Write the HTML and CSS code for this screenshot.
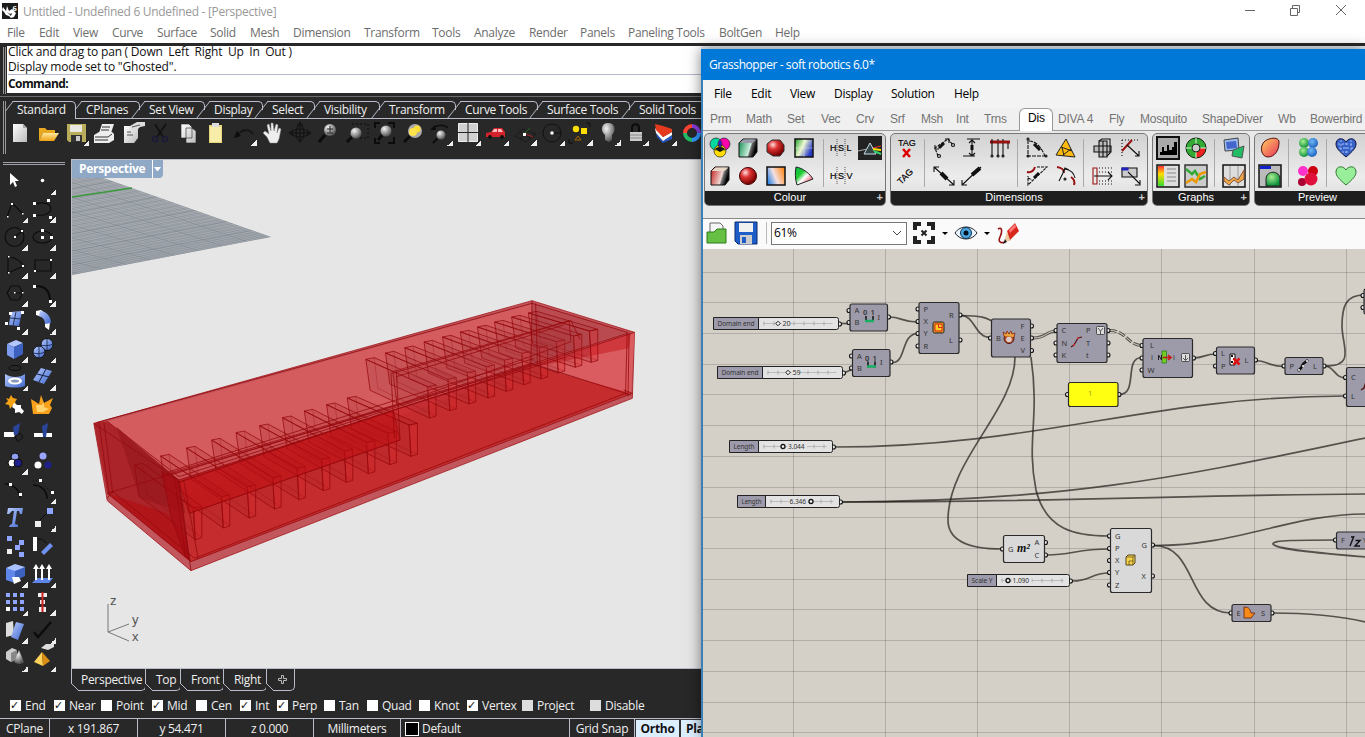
FILE: index.html
```html
<!DOCTYPE html>
<html lang="en">
<head>
<meta charset="utf-8">
<title>Untitled - Perspective</title>
<link rel="stylesheet" href="styles.css">
</head>
<body>
<svg class="defs" aria-hidden="true"><defs>
<linearGradient id="blue" x1="0" y1="0" x2="1" y2="1"><stop offset="0" stop-color="#b9ccff"/><stop offset="1" stop-color="#3f66cc"/></linearGradient>
<linearGradient id="paper" x1="0" y1="0" x2="1" y2="1"><stop offset="0" stop-color="#fff"/><stop offset="1" stop-color="#bbb"/></linearGradient>
<linearGradient id="gold" x1="0" y1="0" x2="0" y2="1"><stop offset="0" stop-color="#ffe9a0"/><stop offset="1" stop-color="#f0a010"/></linearGradient>
<radialGradient id="lens" cx=".35" cy=".3" r=".7"><stop offset="0" stop-color="#f4f4f4"/><stop offset="1" stop-color="#555"/></radialGradient>
<radialGradient id="red" cx=".35" cy=".3" r=".7"><stop offset="0" stop-color="#fdd"/><stop offset=".4" stop-color="#d33"/><stop offset="1" stop-color="#700"/></radialGradient>
<linearGradient id="greenbox" x1="0" y1="0" x2="1" y2=".3"><stop offset="0" stop-color="#0a8a48"/><stop offset=".68" stop-color="#cdeee0"/><stop offset=".76" stop-color="#666"/><stop offset="1" stop-color="#000"/></linearGradient>
<linearGradient id="redbox" x1="0" y1="0" x2="1" y2=".3"><stop offset="0" stop-color="#c01818"/><stop offset=".68" stop-color="#f0d8d4"/><stop offset=".76" stop-color="#777"/><stop offset="1" stop-color="#000"/></linearGradient>
<linearGradient id="gb" x1="0" y1="0" x2="1" y2=".5"><stop offset="0" stop-color="#19a02a"/><stop offset=".5" stop-color="#eef7d0"/><stop offset="1" stop-color="#2538c8"/></linearGradient>
<linearGradient id="bo" x1="0" y1=".7" x2="1" y2=".3"><stop offset="0" stop-color="#2f86e8"/><stop offset=".45" stop-color="#f4e0e0"/><stop offset="1" stop-color="#ff8a20"/></linearGradient>
<linearGradient id="fan" x1="0" y1="0" x2="1" y2="1"><stop offset="0" stop-color="#0b4"/><stop offset=".35" stop-color="#2c3"/><stop offset=".55" stop-color="#fff"/><stop offset="1" stop-color="#e02"/></linearGradient>
<linearGradient id="egg" x1="0" y1="0" x2="1" y2="1"><stop offset="0" stop-color="#ffd060"/><stop offset="1" stop-color="#e8305a"/></linearGradient>
<linearGradient id="leg" x1="0" y1="0" x2="0" y2="1"><stop offset="0" stop-color="#f33"/><stop offset=".4" stop-color="#fd0"/><stop offset="1" stop-color="#3d3"/></linearGradient>
<radialGradient id="ball" cx=".4" cy=".35" r=".65"><stop offset="0" stop-color="#a8f090"/><stop offset="1" stop-color="#0d8f3c"/></radialGradient>
<radialGradient id="ballb" cx=".4" cy=".35" r=".65"><stop offset="0" stop-color="#6fb8f4"/><stop offset="1" stop-color="#1d62c0"/></radialGradient>
</defs></svg>

<div class="rhino">
  <header class="title"><svg class="logo" viewBox="0 0 16 16"><path fill="#1b1b1b" d="M0 0h16v16H0z"/><path fill="#fff" d="M1 4l3 4 1-5 2 5 3-2 2 2 2 2-2 4-3 1-2-2-3-1-2-3-2-2z"/><path fill="#1b1b1b" d="M5 9l3 2 2-1-1 3z"/><text x="10.500" y="7.500" font-size="7.500" font-weight="700" fill="#fff">6</text></svg><span>Untitled - Undefined 6 Undefined - [Perspective]</span>
    <svg class="winbtns" viewBox="0 0 110 20" fill="none" stroke="#666"><path d="M2 8.500h10M47.500 6.500h7v7h-7zM49.500 6v-2.500h7v7h-2M93 3l10 10M103 3l-10 10"/></svg></header>
  <nav class="menu"><span>File</span><span>Edit</span><span>View</span><span>Curve</span><span>Surface</span><span>Solid</span><span>Mesh</span><span>Dimension</span><span>Transform</span><span>Tools</span><span>Analyze</span><span>Render</span><span>Panels</span><span>Paneling Tools</span><span>BoltGen</span><span>Help</span></nav>
  <section class="cmd"><div class="grip"></div><div class="cmdbox"><p>Click and drag to pan ( Down&nbsp; Left&nbsp; Right&nbsp; Up&nbsp; In&nbsp; Out )</p><p>Display mode set to "Ghosted".</p><p class="prompt">Command:</p></div></section>
  <section class="tools">
    <div class="grip"></div>
    <div class="toolbody">
    <div class="tabs"><span class="on">Standard</span><span>CPlanes</span><span>Set View</span><span>Display</span><span>Select</span><span>Visibility</span><span>Transform</span><span>Curve Tools</span><span>Surface Tools</span><span>Solid Tools</span></div>
    <div class="iconrow">
      <svg viewBox="0 0 28 28"><path fill="url(#paper)" d="M7 5h10l4 4v14H7z"/><path d="M17 5v4h4" fill="#aaa"/></svg>
      <svg viewBox="0 0 28 28"><path fill="#e8a820" d="M5 9h6l2 2h8v3H9l-4 8z"/><path fill="url(#gold)" d="M9 14h16l-5 8H5z"/></svg>
      <svg class="more" viewBox="0 0 28 28"><path fill="#b9ad5c" d="M5 5h19v18H7l-2-2z"/><path fill="#e8e8e0" d="M8 6h12v7H8z"/><path fill="#333" d="M9 16h11v7H9z"/><path fill="#ccc" d="M14 17h4v5h-4z"/></svg>
      <svg viewBox="0 0 28 28"><path fill="#eee" d="M12 5h12l-3 9H9zM4 16l5-3h13l2 2v6l-5 3H4z"/><path d="M5 18h13l4-3M5 21h13M12 8h8M11 11h8" stroke="#333" fill="none"/></svg>
      <svg viewBox="0 0 28 28"><path fill="url(#paper)" d="M6 7h14v12l-4 5H6z"/><path fill="#ddd" d="M12 7l7-4h8v4l-5 1-4 4-5-1z"/><path d="M9 13h4M9 16h6M14 8l8-2" stroke="#555"/></svg>
      <svg viewBox="0 0 28 28" fill="none" stroke="#101014" stroke-width="1.500"><path d="M9 5l8 13M20 5l-9 13"/><circle cx="9" cy="20" r="2.500" stroke="#1b1b38"/><circle cx="19" cy="20" r="2.500" stroke="#1b1b38"/></svg>
      <svg viewBox="0 0 28 28"><path fill="url(#paper)" stroke="#222" stroke-width=".6" d="M7 5h8l3 3v11H7zM12 9h6l4 3v12H12z"/></svg>
      <svg viewBox="0 0 28 28"><path fill="#e8d67a" d="M7 6h13v18H7z"/><path fill="#f7eda8" d="M8 8h11v15H8z"/><path fill="#ddd" d="M10 4h7v4h-7z"/></svg>
      <svg class="more" viewBox="0 0 28 28"><path d="M23 15c-3-5-9-5-14-1" stroke="#151515" stroke-width="2" fill="none"/><path d="M4 19l3-7 4 5z" fill="#0c0c0c"/></svg>
      <svg viewBox="0 0 28 28"><path fill="#eee" stroke="#888" stroke-width=".5" d="M12 24l-3-6-4-4 2-2 4 3-2-9 2-1 2 7V4h2l1 8 2-7 2 1-1 8 2-5 2 1-2 10-2 4z"/></svg>
      <svg viewBox="0 0 28 28" fill="none" stroke="#111" stroke-width="1"><path d="M14 4v20M4 14h20M11 7l3-4 3 4M7 11l-4 3 4 3M21 11l4 3-4 3"/><ellipse cx="14" cy="14" rx="8" ry="4"/><ellipse cx="14" cy="14" rx="4" ry="8"/></svg>
      <svg viewBox="0 0 28 28"><path d="M5 23l6-7" stroke="#0c0c0c" stroke-width="3"/><circle cx="16" cy="11" r="6" fill="url(#lens)"/><path d="M13 10h6M16 7v6M13 14h6" stroke="#222"/></svg>
      <svg viewBox="0 0 28 28"><path d="M5 23l6-6" stroke="#0c0c0c" stroke-width="3"/><path d="M10 5h16v14H18" stroke="#0c0c0c" fill="none" stroke-dasharray="2 2"/><circle cx="14" cy="14" r="5.500" fill="url(#lens)"/></svg>
      <svg viewBox="0 0 28 28"><path d="M5 9V4h5M18 4h6v5M24 18v6h-6M10 24H5v-5" stroke="#0c0c0c" stroke-width="2" fill="none"/><path d="M8 21l5-6" stroke="#0c0c0c" stroke-width="3"/><circle cx="16" cy="12" r="5.500" fill="url(#lens)"/></svg>
      <svg viewBox="0 0 28 28"><path d="M6 23l6-6" stroke="#0c0c0c" stroke-width="3"/><circle cx="17" cy="12" r="7" fill="#aaa"/><circle cx="19" cy="10" r="3.500" fill="#fd3"/><circle cx="15" cy="13" r="4" fill="#ffe34a"/></svg>
      <svg class="more" viewBox="0 0 28 28"><path d="M22 9c-4-4-9-3-14-1" stroke="#0c0c0c" stroke-width="1.500" fill="none"/><path d="M4 11l5-5 1 5z" fill="#0c0c0c"/><path d="M7 24l6-6" stroke="#0c0c0c" stroke-width="2"/><circle cx="15" cy="16" r="4.500" fill="url(#lens)"/></svg>
      <svg class="more" viewBox="0 0 28 28"><path fill="#d0d0d0" stroke="#eee" d="M4.500 4.500h19v18h-19z"/><path d="M14 4v19M4 13.500h20" stroke="#222"/></svg>
      <svg class="more" viewBox="0 0 28 28"><path fill="#d3222a" d="M4 14l5-1 3-4h8l3 4v5H4z"/><path fill="#fbb" d="M12 10h3v3h-5zM16 10h3l2 3h-5z"/><circle cx="8" cy="18" r="2" fill="#111"/><circle cx="20" cy="18" r="2" fill="#111"/></svg>
      <svg class="more" viewBox="0 0 28 28"><path d="M5 17l8-7 13 5-10 8zM9 13l12 6M17 12l-7 8" stroke="#1a1a1a" fill="none"/><path d="M15 14l5-5" stroke="#262"/><path d="M16 15l7 3" stroke="#a22"/><path fill="#fff" d="M13 14h3v3h-3z"/></svg>
      <svg class="more" viewBox="0 0 28 28"><circle cx="14" cy="14" r="9" fill="none" stroke="#111"/><path d="M14 14h10" stroke="#111"/><circle cx="14" cy="14" r="1.800" fill="#fff"/></svg>
      <svg class="more" viewBox="0 0 28 28"><circle cx="10" cy="10" r="3.200" fill="#fd0"/><path fill="#fd0" d="M15 9h6v6h-6z"/><path d="M12 17l3 4H9z" fill="none" stroke="#a60"/><path d="M20 4h4v4M3 20v4h4" fill="none" stroke="#0c0c0c" /></svg>
      <svg class="more" viewBox="0 0 28 28"><path fill="url(#lens)" d="M14 4c8 0 8 8 4 12v5l-3 2-4-2v-5C6 12 7 4 14 4z"/></svg>
      <svg class="more" viewBox="0 0 28 28"><path d="M10 14V9c0-5 7-5 7 0v5" stroke="#0c0c0c" stroke-width="2" fill="none"/><path fill="#ccc" d="M8 13h12v9H8z"/><path d="M8 16h12M8 19h12" stroke="#888"/></svg>
      <svg class="more" viewBox="0 0 28 28"><path fill="#2356c0" d="M6 14l7 8 9-6v4l-9 4-6-6z"/><path fill="#fff" d="M5 9l8 9 9-5v3l-9 6-7-8z"/><path fill="#e53b1c" d="M5 5l8 2 9 3v3l-9 5-7-7z"/></svg>
      <svg viewBox="0 0 28 28" fill="none" stroke-width="4"><path d="M14 7a7 7 0 0 1 7 7" stroke="#8a3de0"/><path d="M21 14a7 7 0 0 1-7 7" stroke="#39f"/><path d="M14 21a7 7 0 0 1-7-7" stroke="#2b6"/><path d="M7 14a7 7 0 0 1 7-7" stroke="#f43"/></svg>
    </div></div>
  </section>
  <div class="work">
    <aside class="side">
      <div class="hgrip"></div>
      <div class="palette">
        <svg viewBox="0 0 28 28"><path fill="#fff" d="M10 6v12l3-3 2 5 2-1-2-5h4z"/></svg>
        <svg class="more" viewBox="0 0 28 28"><circle cx="14.500" cy="13.500" r="1.800" fill="#fff"/></svg>
        <svg class="more" viewBox="0 0 28 28"><path d="M7 22l5-14 11 11" fill="none" stroke="#0c0c0c" stroke-width="1.100"/><path fill="#fff" d="M7 21h1.500v1.500H7zM11 8h2v2h-2zM22 18h1.500v1.500H22z"/></svg>
        <svg class="more" viewBox="0 0 28 28"><path d="M7 9c20-6 22 14 0 11" fill="none" stroke="#0c0c0c" stroke-width="1.100"/><path fill="#fff" d="M5 7h3v3H5zM19 4h3v3h-3zM5 19h3v3H5zM21 21h3v3h-3z"/></svg>
        <svg class="more" viewBox="0 0 28 28"><g fill="none" stroke="#0c0c0c" stroke-width="1.100"><circle cx="14.500" cy="14" r="9.500"/><path d="M15 14l7-6"/></g><path fill="#fff" d="M14 13h2v2h-2zM21 7h2v2h-2z"/></svg>
        <svg class="more" viewBox="0 0 28 28"><ellipse cx="14.500" cy="14" rx="9.500" ry="6" fill="none" stroke="#0c0c0c" stroke-width="1.100"/><path fill="#fff" d="M13 6h3v3h-3zM13 13h3v3h-3zM22 13h3v3h-3z"/></svg>
        <svg class="more" viewBox="0 0 28 28"><path d="M8 22V6c8 0 12 4 16 9z" fill="none" stroke="#0c0c0c" stroke-width="1.100"/><path fill="#fff" d="M8 5h1.500v1.500H8zM8 21h1.500v1.500H8zM22 14h2v2h-2z"/></svg>
        <svg class="more" viewBox="0 0 28 28"><path d="M7 9h16v11H7z" fill="none" stroke="#0c0c0c" stroke-width="1.100"/><path fill="#fff" d="M22 8h2v2h-2zM6 19h2v2H6z"/></svg>
        <svg class="more" viewBox="0 0 28 28"><path d="M7 14l4-7h8l4 7-4 7h-8z" fill="none" stroke="#0c0c0c" stroke-width="1.100"/><path d="M14 14h8" stroke="#0c0c0c"/><path fill="#fff" d="M14 13h1.500v1.500H14zM22 13h1.500v1.500H22z"/></svg>
        <svg class="more" viewBox="0 0 28 28"><path d="M8 7c10 0 14 5 14 15" fill="none" stroke="#0c0c0c" stroke-width="2"/><path fill="#fff" d="M5 6h3v3H5zM21 21h3v3h-3z"/></svg>
        <svg class="more" viewBox="0 0 28 28"><path fill="url(#blue)" d="M11 5l11-1-3 15-10-1z"/><path d="M16 5l-3 14M10 11l11 1" stroke="#235"/><path fill="#fff" d="M9 5h3v3H9zM21 4h3v3h-3zM5 15h3v3H5zM17 20h3v3h-3z"/></svg>
        <svg class="more" viewBox="0 0 28 28"><path fill="#fff" d="M8 4l5-1 4 3-3 4-6-2zM17 16l5-1-1 8-4-3z"/><path fill="url(#blue)" d="M12 4c6 0 11 5 11 12l-6 1c0-5-3-7-6-8z"/></svg>
        <svg class="more" viewBox="0 0 28 28"><path fill="#b4c8ff" d="M7 9l9-4 7 3-9 4z"/><path fill="#7d9cf0" d="M7 9l7 3v12l-7-4z"/><path fill="#3c61c0" d="M14 12l9-4v11l-9 5z"/></svg>
        <svg class="more" viewBox="0 0 28 28"><circle cx="19" cy="9.500" r="6" fill="url(#blue)" stroke="#111"/><circle cx="11" cy="17" r="6" fill="url(#blue)" stroke="#111"/><path d="M13 10c4 1 8 1 12-1M5 18c4 1 8 1 12-1M11 11v12M19 4v11" stroke="#124" stroke-width=".8" fill="none"/></svg>
        <svg class="more" viewBox="0 0 28 28"><ellipse cx="15" cy="5" rx="6" ry="2.500" fill="none" stroke="#0c0c0c"/><path fill="url(#blue)" d="M5 11c6 4 15 4 20 0v12c-5 2-15 2-20 0z"/><ellipse cx="15" cy="18" rx="7" ry="3.500" fill="#fff"/><ellipse cx="15" cy="18" rx="4" ry="1.500" fill="#89b"/></svg>
        <svg class="more" viewBox="0 0 28 28"><path fill="url(#blue)" d="M13 5l11 3-8 13-11-4z"/><path d="M9 11l12 3M18 6l-7 13" stroke="#124"/></svg>
        <svg viewBox="0 0 28 28"><path fill="#f7a316" d="M6 7l3 1 2-4 2 3 4 1-2 3 2 4-4-1-3 4-1-4-4-1 3-3z"/><path fill="#fff" d="M14 12l3 2 4 0 0 3 3 3-2 3-3-2-4 1 0-4-3-2z"/></svg>
        <svg viewBox="0 0 28 28"><path fill="#f9a11b" d="M3 8l8 5 2-9 3 8 9-5-3 7 2 3-3 6H5z"/><path fill="#ffd370" d="M8 14l6 0 2-3 0 5 5 2-6 3H9z"/></svg>
        <svg viewBox="0 0 28 28"><path fill="#fff" d="M4 13h12l-2 5H4z"/><path fill="#29459a" d="M13 8l7-4-2 12h-4z"/><path d="M15 18l5-4 3 4-5 5z" fill="none" stroke="#0c0c0c"/></svg>
        <svg viewBox="0 0 28 28"><path fill="#fff" d="M6 14h18v4H6z"/><path fill="#29459a" d="M14 7l6-3-2 14h-3z"/></svg>
        <svg class="more" viewBox="0 0 28 28" stroke="#0c0c0c"><circle cx="15" cy="10" r="4" fill="#8e9df0"/><circle cx="12" cy="16" r="4" fill="#fff"/><circle cx="18" cy="16" r="4" fill="#20208c"/></svg>
        <svg viewBox="0 0 28 28"><circle cx="15" cy="9" r="3.500" fill="#9aa6ff"/><circle cx="10" cy="18" r="3.500" fill="#fff"/><circle cx="20" cy="18" r="3.500" fill="#20208c"/></svg>
        <svg viewBox="0 0 28 28"><path d="M5 8c7 0 15 5 15 14" fill="none" stroke="#0c0c0c" stroke-width="1.600"/><path fill="#fff" d="M9 7h3v3H9zM19 17h3v3h-3z"/></svg>
        <svg class="more" viewBox="0 0 28 28"><path d="M5 9c8 0 14 5 14 14" fill="none" stroke="#0c0c0c" stroke-width="1.600"/><path d="M5 5h9l9 12" stroke="#0c0c0c" stroke-dasharray="1 2" fill="none"/><path fill="#fff" d="M11 3h3v3h-3zM23 15h3v3h-3z"/></svg>
        <svg viewBox="0 0 28 28"><path fill="url(#blue)" d="M8 4h15l-1 6h-2l-1-3h-2l-2 13 3 1v2H9l1-2 2-1 2-13h-2l-3 3H7z"/></svg>
        <svg class="more" viewBox="0 0 28 28"><path d="M12 16l8-8" stroke="#0c0c0c"/><path fill="#8fa6ff" d="M19 4h6v6h-6z"/><path fill="#eee" d="M7 17h6v6H7z"/></svg>
        <svg viewBox="0 0 28 28"><path fill="#8fa6ff" d="M7 4h5v5H7zM19 8h5v5h-5zM15 13h5v5h-5zM19 20h5v5h-5z"/><path fill="#eee" d="M7 17h5v5H7z"/></svg>
        <svg viewBox="0 0 28 28"><path fill="#fff" d="M5 5h4v14H5z"/><path d="M10 7c6 0 6 3 9 4" stroke="#0c0c0c" fill="none"/><path fill="#6e90ee" d="M13 20l9-9 3 3-9 9z"/></svg>
        <svg class="more" viewBox="0 0 28 28"><path fill="#a9c2ff" d="M6 8l9-4 10 3v5l-8 3z"/><path fill="#5f86ea" d="M6 8l9 3v12l-9-3z"/><path fill="#3c61c0" d="M15 11l10-4v9l-10 5z"/><path fill="#fff" d="M12 17h7l2 4-7 3z"/></svg>
        <svg class="more" viewBox="0 0 28 28"><path fill="#5f86ea" d="M4 23l5-5h16l-4 5z"/><path d="M8 20V8M14 20V8M21 20V8" stroke="#fff" stroke-width="2"/><path fill="#fff" d="M5 9l3-5 3 5zM11 9l3-5 3 5zM18 9l3-5 3 5z"/></svg>
        <svg class="more" viewBox="0 0 28 28"><path fill="#8fa6ff" d="M6 5h4v4H6zM13 5h4v4h-4zM20 5h4v4h-4zM6 12h4v4H6zM13 12h4v4h-4zM20 12h4v4h-4zM13 19h4v4h-4zM20 19h4v4h-4z"/><path fill="#fff" d="M6 19h4v4H6z"/></svg>
        <svg class="more" viewBox="0 0 28 28"><path fill="#eee" d="M10 5h9v4h-9zM12 12h5v4h-5zM11 19h7v5h-7z"/><path d="M14.500 4v20" stroke="#c22" stroke-width="2"/></svg>
        <svg class="more" viewBox="0 0 28 28"><path fill="#ddd" d="M6 7l7-2 1 14-8 2z"/><path fill="url(#blue)" d="M16 6l8 2-6 16-7-3z"/></svg>
        <svg class="more" viewBox="0 0 28 28"><path d="M6 16l4 5 13-15" stroke="#0c0c0c" stroke-width="2.500" fill="none"/></svg>
        <svg class="more" viewBox="0 0 28 28"><path fill="#ccc" d="M6 8l6-4 5 2v9l-6 3-5-3z"/><path fill="#888" d="M11 9l6-3v9l-6 3z"/><path fill="url(#lens)" d="M19 6l5 12c-3 3-7 2-10 0z"/></svg>
        <svg class="more" viewBox="0 0 28 28"><path fill="#ddd" d="M13 4l5-4h8v3l-6 3z"/><path fill="#ffd25a" d="M14 8l-8 10 9 4z"/><path fill="#d98d12" d="M14 8l8 9-7 5z"/></svg>
      </div>
    </aside>
    <main class="view">
      <svg class="scene" id="scene" viewBox="72 160 629 509"></svg>
      <div class="vlabel"><b>Perspective</b><i></i></div>
    </main>
  </div>
  <div class="vtabs"><span>Perspective</span><span>Top</span><span>Front</span><span>Right</span><span class="plus"><svg viewBox="0 0 12 12"><path d="M4.500 1.500h2v3h3v2h-3v3h-2v-3h-3v-2h3z" fill="none" stroke="#bbb"/></svg></span></div>
  <div class="osnap"><span class="c">End</span><span class="c">Near</span><span>Point</span><span class="c">Mid</span><span>Cen</span><span class="c">Int</span><span class="c">Perp</span><span>Tan</span><span>Quad</span><span>Knot</span><span class="c">Vertex</span><span class="g">Project</span><span class="g">Disable</span></div>
  <footer class="status"><span>CPlane</span><span>x 191.867</span><span>y 54.471</span><span>z 0.000</span><span>Millimeters</span><span class="layer"><i></i>Default</span><span>Grid Snap</span><b>Ortho</b><b class="last">Planar</b></footer>
</div>

<div class="gh">
  <header class="ghtitle">Grasshopper - soft robotics 6.0*</header>
  <nav class="ghmenu"><span>File</span><span>Edit</span><span>View</span><span>Display</span><span>Solution</span><span>Help</span></nav>
  <nav class="ghtabs"><span>Prm</span><span>Math</span><span>Set</span><span>Vec</span><span>Crv</span><span>Srf</span><span>Msh</span><span>Int</span><span>Trns</span><span class="on">Dis</span><span>DIVA 4</span><span>Fly</span><span>Mosquito</span><span>ShapeDiver</span><span>Wb</span><span>Bowerbird</span></nav>
  <div class="ribbon">
    <section class="group colour"><div class="icons">
      <svg viewBox="0 0 24 24"><circle cx="8" cy="8" r="6" fill="#00d8a0"/><circle cx="16" cy="8" r="6" fill="#f0a"/><circle cx="12" cy="15" r="6" fill="#fd0"/><path d="M12 4a6 6 0 0 1 0 8 6 6 0 0 1 0-8z" fill="#22d"/><path d="M7 13a6 6 0 0 1 5-2 6 6 0 0 1 5 2l-5 3z" fill="#111"/><g fill="none" stroke="#222" stroke-width=".7"><circle cx="8" cy="8" r="6"/><circle cx="16" cy="8" r="6"/><circle cx="12" cy="15" r="6"/></g></svg>
      <svg viewBox="0 0 24 24"><path fill="url(#greenbox)" stroke="#111" d="M3 7l4-4h14v13l-4 5H3z"/><path fill="#99a" d="M3.500 7l4-3.500h13l-4 3.500z"/></svg>
      <svg viewBox="0 0 24 24"><path fill="url(#red)" stroke="#333" d="M8 4h8l4 5v6l-4 5H9l-6-4V8z"/></svg>
      <svg viewBox="0 0 24 24"><path fill="url(#gb)" stroke="#111" stroke-width="1.500" d="M3 3h18v18H3z"/><path d="M12 3v18M3 12h18" stroke="#fff" opacity=".3"/></svg>
      <svg viewBox="0 0 24 24" class="txt"><text x="1" y="15">H</text><text x="9" y="15">S</text><text x="17.500" y="15">L</text><path d="M8 3v18M16 3v18" stroke="#555" stroke-dasharray="1 1"/></svg>
      <svg viewBox="0 0 24 24"><path fill="#222" d="M0 0h24v24H0z"/><path d="M12 7l6 11H6z" fill="#344" stroke="#cde" /><path d="M0 15l9-2" stroke="#aaa"/><path d="M15 12l8-2" stroke="#e33"/><path d="M15 13l8 1" stroke="#fd0" stroke-width="2"/><path d="M16 15l7 3" stroke="#3c6" stroke-width="2"/></svg>
      <svg viewBox="0 0 24 24"><path fill="url(#redbox)" stroke="#111" d="M3 7l4-4h14v13l-4 5H3z"/><path fill="#e8d8c8" d="M3.500 7l4-3.500h13l-4 3.500z"/></svg>
      <svg viewBox="0 0 24 24"><circle cx="12" cy="12" r="8.500" fill="url(#red)" stroke="#400"/></svg>
      <svg viewBox="0 0 24 24"><path fill="url(#bo)" stroke="#111" stroke-width="1.500" d="M3 3h18v18H3z"/></svg>
      <svg viewBox="0 0 24 24"><path fill="url(#fan)" stroke="#222" d="M4 3c7 1 14 7 17 12L5 21C3 15 3 8 4 3z"/></svg>
      <svg viewBox="0 0 24 24" class="txt"><text x="1" y="15">H</text><text x="9" y="15">S</text><text x="17.500" y="15">V</text><path d="M8 3v18M16 3v18" stroke="#555" stroke-dasharray="1 1"/></svg>
    </div><footer>Colour</footer></section>
    <section class="group dims"><div class="icons">
      <svg viewBox="0 0 24 24" class="txt"><text x="3" y="10">TAG</text><path d="M8 13l7 8M15 13l-7 8" stroke="#d00" stroke-width="2.500"/></svg>
      <svg viewBox="0 0 24 24" class="ln"><path d="M6 20L3 12l13-9 5 6" stroke-dasharray="3 1"/><path d="M7 12l5-5" stroke-width="3"/><path d="M3 9v4h4M13 3h4v4"/><circle cx="7" cy="20" r="1.500"/><circle cx="21" cy="9" r="1.500"/></svg>
      <svg viewBox="0 0 24 24" class="ln"><path d="M7 3h13M3 20h12M12 4v15M9 7l3-3 3 3M9 17l3 3 3-3"/><path d="M12 9v5" stroke-width="3"/></svg>
      <svg viewBox="0 0 24 24" class="ln"><path d="M2 6h20" stroke="#911" stroke-width="3"/><path d="M4 3v16M10 7v13M15 7v13M20 7v6M10 3v2M15 3v2"/><circle cx="4" cy="20" r="1"/><circle cx="10" cy="20" r="1"/><circle cx="15" cy="20" r="1"/></svg>
      <svg viewBox="0 0 24 24" class="ln"><path d="M3 4v16h17M4 5c8 0 13 8 16 15" stroke-dasharray="4 1"/><path d="M9 8l6 6" stroke-width="3"/><circle cx="3" cy="3" r="1"/><circle cx="21" cy="20" r="1"/><circle cx="3" cy="20" r="1"/></svg>
      <svg viewBox="0 0 24 24"><path fill="#fb1" stroke="#222" d="M12 3L2 19l19 2zM7 11l11 4M8 11l2 9M17 13l-8 6"/></svg>
      <svg viewBox="0 0 24 24" class="ln"><path d="M3 10h17v6H3zM8 5h8v16H8z" fill="#bbb"/><path d="M12 5v16M8 5l3-2h8v14l-3 3"/></svg>
      <svg viewBox="0 0 24 24" class="ln"><path d="M3 4h17M3 4v16" stroke-dasharray="1 2"/><path d="M3 15L13 4" stroke="#911" stroke-width="2"/><path d="M8 9l12 11M16 20h4v-5"/></svg>
      <svg viewBox="0 0 24 24" class="txt"><text x="0" y="0" transform="translate(6 21) rotate(-45)">TAG</text></svg>
      <svg viewBox="0 0 24 24" class="ln"><path d="M2 3l20 18M2 8V3h5M22 16v5h-5"/><path d="M9 9l6 6" stroke-width="4"/></svg>
      <svg viewBox="0 0 24 24" class="ln"><path d="M2 21L21 3M2 16v5h5"/><path d="M12 11l8-7" stroke-width="4"/></svg>
      <svg viewBox="0 0 24 24"></svg>
      <svg viewBox="0 0 24 24" class="ln"><path d="M2 8c5 1 7-2 8-5" stroke="#911" stroke-width="2"/><path d="M12 3h10L3 21v-9M3 14l4 2" stroke-dasharray="3 1"/><path d="M9 14l5-5" stroke-width="3"/></svg>
      <svg viewBox="0 0 24 24" class="ln"><path d="M3 3c6 1 7 3 7 6M20 21c1-3 0-6-3-8" stroke="#911" stroke-width="2"/><path d="M5 17l6-12c6 1 9 4 10 9M9 8l2-4 4 2"/><circle cx="11" cy="15" r="1"/></svg>
      <svg viewBox="0 0 24 24" class="ln"><path d="M2 4h4v16H2z" stroke="#911"/><path d="M8 4h13M8 20h13M8 8h13M8 17h13" stroke-dasharray="1 2"/><path d="M3 12h18M17 8l4 4-4 4"/></svg>
      <svg viewBox="0 0 24 24" class="ln"><path d="M3 4h15v9H3z" fill="#ccc"/><path d="M3 4h6v2H3z" fill="#22b" stroke="#22b"/><path d="M9 8l12 12M21 16v5h-5"/></svg>
    </div><footer>Dimensions</footer></section>
    <section class="group graphs"><div class="icons">
      <svg viewBox="0 0 24 24"><path fill="#aaa" stroke="#111" stroke-width="2" d="M1 1h22v22H1z"/><path fill="#000" d="M4 19h17V6h-3v5h-2v3h-3V9h-2v6H8v-4H6v5H4z"/></svg>
      <svg viewBox="0 0 24 24"><circle cx="12" cy="12" r="7" fill="none" stroke="#3a3" stroke-width="6"/><path d="M12 19a7 7 0 0 0 7-7" fill="none" stroke="#e22" stroke-width="6"/><circle cx="12" cy="12" r="10" fill="none" stroke="#121"/><path d="M12 2v6M2 12h6M16 12h6M12 16v6" stroke="#dfd"/><circle cx="12" cy="12" r="4" fill="#ccc" stroke="#121"/></svg>
      <svg viewBox="0 0 24 24"><path fill="#9be" stroke="#444" d="M2 4l14-2 1 12-14 1z"/><path fill="#46c" d="M4 6l10-1 1 7-10 1z"/><path fill="#2b6" stroke="#555" d="M11 14l11-4-2 12-10-2z"/></svg>
      <svg viewBox="0 0 24 24"><path fill="#ddd" stroke="#111" stroke-width="1.500" d="M1 1h22v22H1z"/><path fill="url(#leg)" d="M2 2h6v20H2z"/><path d="M11 5h9M11 9h9M11 13h9M11 17h9" stroke="#888"/></svg>
      <svg viewBox="0 0 24 24"><path fill="#ccc" stroke="#333" stroke-width="1.500" d="M1 1h22v22H1z"/><path d="M2 5l6 5 3-3 5 8 5-3" stroke="#3a3" stroke-width="2.500" fill="none"/><path d="M2 19l6-4 4 3 4-8 6-2" stroke="#e90" stroke-width="2.500" fill="none"/></svg>
      <svg viewBox="0 0 24 24"><path fill="#ddd" stroke="#111" stroke-width="1.500" d="M1 1h22v22H1z"/><path d="M8 2v20M16 2v20" stroke="#999"/><path d="M2 13l5 4 5-4 4 3 6-10v9l-6 4-4-3-5 5-5-4z" fill="#ea4" stroke="#854"/></svg>
    </div><footer>Graphs</footer></section>
    <section class="group preview"><div class="icons">
      <svg viewBox="0 0 24 24"><path fill="url(#egg)" stroke="#511" d="M7 5c6-4 15-4 14 2 0 8-5 14-11 14C3 21 1 10 7 5z"/></svg>
      <svg viewBox="0 0 24 24"><circle cx="8" cy="7" r="5" fill="url(#ball)"/><circle cx="17" cy="7" r="5" fill="url(#ballb)"/><circle cx="8" cy="16" r="5" fill="url(#ball)"/><circle cx="16" cy="16" r="5" fill="url(#ballb)"/></svg>
      <svg viewBox="0 0 24 24"><path fill="#3562c4" stroke="#114" d="M12 21C5 15 2 12 2 8c0-6 7-7 10-2 3-5 10-4 10 2 0 4-3 7-10 13z"/><path d="M4 8h16M5 12h14M8 16h8M7 4v12M12 7v12M17 4v12" stroke="#abf" stroke-dasharray="2 2"/></svg>
      <svg viewBox="0 0 24 24"><path fill="#bbb" stroke="#111" stroke-width="1.500" d="M1 1h22v22H1z"/><path fill="#12c" d="M2 2h11v3H2z"/><path fill="url(#ball)" stroke="#222" d="M8 22v-7c0-9 14-9 14 0v7z"/></svg>
      <svg viewBox="0 0 24 24"><circle cx="7" cy="7" r="5" fill="#f3c"/><circle cx="17" cy="7" r="5" fill="#c01"/><circle cx="6" cy="18" r="4" fill="#a03"/><circle cx="15" cy="15" r="6.500" fill="#e0103c"/></svg>
      <svg viewBox="0 0 24 24"><path fill="#9e9" stroke="#373" d="M12 21C5 15 2 12 2 8c0-6 7-7 10-2 3-5 10-4 10 2 0 4-3 7-10 13z"/></svg>
    </div><footer>Preview</footer></section>
  </div>
  <div class="ghbar">
    <svg viewBox="0 0 24 24"><path fill="#f6f6f6" stroke="#666" d="M6 2h10l3 3v9H6z"/><path fill="#66c043" stroke="#2c7a1c" d="M3 11h7l3-3h9v14H3z"/></svg>
    <svg viewBox="0 0 24 24"><path fill="#1e5cc8" stroke="#0a2a70" d="M1 1h22v22H4l-3-3z"/><path fill="#f0f0f0" d="M5 2h14v9H5z"/><path fill="#ccc" d="M6 14h12v9H6z"/><path fill="#1e5cc8" d="M8 16h4v6H8z"/></svg>
    <hr>
    <div class="combo">61%<svg viewBox="0 0 10 6"><path d="M1 1l4 4 4-4" fill="none" stroke="#444"/></svg></div>
    <svg viewBox="0 0 24 24" fill="none" stroke="#222" stroke-width="4"><path d="M3 9V3h6M15 3h6v6M21 15v6h-6M9 21H3v-6"/><path d="M9.500 9.500l5 5M14.500 9.500l-5 5" stroke-width="2"/></svg>
    <i class="drop"></i>
    <svg viewBox="0 0 24 24"><path d="M1 12C6 4 18 4 23 12 18 20 6 20 1 12z" fill="#e8f4ff" stroke="#222"/><circle cx="12" cy="12" r="5.500" fill="#49a8e0" stroke="#135"/><circle cx="12" cy="12" r="2.500" fill="#012"/></svg>
    <i class="drop"></i>
    <svg viewBox="0 0 24 24"><path d="M2 8c5-3 4 4 2 8s0 7 5 5" fill="none" stroke="#911" stroke-width="1.600"/><path fill="#d8281c" d="M11 10l8-8 4 8-10 10z"/><path fill="#f77" d="M13 9l6-6 1 3-6 6z"/><path fill="#edc9a0" d="M11 10l3 9-6 3z"/><path fill="#222" d="M9 18l-2 5 4-2z"/></svg>
  </div>
  <svg class="canvas" id="canvas" viewBox="703 249 662 488"></svg>
</div>
<script src="draw.js"></script>
</body>
</html>
```
FILE: styles.css
```css
* { box-sizing: border-box; }
body { margin: 0; width: 1365px; height: 737px; overflow: hidden; background: #282828; color: #f0f0f0; font: 12px/16px "Open Sans", "Noto Sans", sans-serif; letter-spacing: -.3px; position: relative; }
p { margin: 0; }
span, b { white-space: nowrap; }
.defs { position: absolute; width: 0; height: 0; }
.rhino { width: 1365px; height: 737px; display: flex; flex-direction: column; }
.title { height: 23px; background: #fff; color: #999; display: flex; align-items: center; padding-left: 2px; flex: none; }
.title .logo { width: 16px; height: 16px; margin: 0 5px 1px 0; }
.title .winbtns { width: 110px; height: 20px; margin-left: auto; margin-right: 12px; }
.title span { letter-spacing: -.3px; }
.menu { flex: none; height: 20px; background: #fff; color: #6d6d6d; display: grid; align-items: center; padding-left: 7px; grid-template-columns: 32px 34px 39px 45px 53px 40px 43px 71px 68px 42px 55px 51px 48px 91px 56px 40px; }
.cmd { height: 54px; flex: none; padding-top: 3px; display: flex; border-bottom: 1px solid #6b6b6b; }
.grip { width: 3px; margin: 1px 0 2px 3px; border: solid #999; border-width: 0 1px; flex: none; }
.cmdbox { margin-left: 1px; flex: 1; height: 47px; background: #fff; color: #111; padding-left: 1px; }
.cmdbox p { height: 13px; line-height: 12px; letter-spacing: -.15px; word-spacing: -.2px; }
.cmdbox p + p { height: 15px; line-height: 15px; }
.cmdbox p.prompt { border-top: 1px solid #b4b8cc; height: 18px; line-height: 17px; font-weight: 700; letter-spacing: -.6px; }
.tools { height: 62px; flex: none; display: flex; padding-top: 4px; }
.tools .grip { margin: 0 0 5px 3px; }
.toolbody { width: 700px; }
.tabs { height: 17px; display: grid; grid-template-columns: 70px 56px 65px 58px 52px 65px 76px 82px 92px 90px; }
.tabs span { position: relative; line-height: 17px; text-align: left; padding-left: 17px; border-bottom: 1px solid #b9bccb; }
.tabs span::before { content: ""; position: absolute; left: 6px; top: 0; bottom: 0; width: 30px; border-left: 1px solid #b9bccb; border-top: 1px solid #b9bccb; transform: skewX(-38deg); }
.tabs span::after { content: ""; position: absolute; left: 30px; right: -8px; top: 0; height: 8px; border-top: 1px solid #b9bccb; border-right: 1px solid #b9bccb; border-radius: 0 5px 0 0; }
.tabs span:nth-child(2) { padding-left: 10px; }
.tabs span:nth-child(2)::before { left: 2px; bottom: 8px; }
.tabs .on { padding-left: 11px; border-bottom: 0; }
.tabs .on::before { bottom: 8px; left: 3px; }
.tabs .on::after { right: 0; height: 17px; }
.iconrow { display: grid; grid-template-columns: repeat(25, 28px); padding-top: 1px; }
.iconrow svg, .palette svg { width: 28px; height: 28px; display: block; }
.more { background: linear-gradient(135deg, transparent 50%, #eee 50%) no-repeat right 1px bottom 1px / 6px 6px; }
.work { flex: none; height: 510px; display: grid; grid-template-columns: 71px 1fr; grid-template-rows: 510px; }
.side { padding-top: 3px; }
.hgrip { height: 3px; margin: 0 6px 2px 3px; border: solid #a0a0a8; border-width: 1px 0; }
.palette { display: grid; grid-template-columns: 28px 28px; grid-auto-rows: 28.060px; }
.palette .more { background-position: right 0 bottom 0; }
.view { background: #e6e6e6; border: solid #b9bccb; border-width: 1px 0 1px 1px; position: relative; overflow: hidden; }
.scene { width: 629px; height: 509px; display: block; }
.scene polygon, .scene path, .scene polyline { vector-effect: non-scaling-stroke; }
.vlabel { position: absolute; left: 0; top: 0; width: 91px; height: 18px; background: #8fa8c6; color: #fff; display: flex; border-radius: 0 0 4px 0; }
.vlabel b { width: 81px; padding-left: 7px; line-height: 18px; letter-spacing: -.3px; border-right: 1px solid #fff; }
.vlabel i { margin: 7px 0 0 1px; width: 7px; border: 3.500px solid transparent; border-top: 4px solid #fff; height: 0; }
.vtabs { height: 20px; flex: none; display: grid; grid-template-columns: 75px 35px 43px 43px 28px; padding-left: 71px; }
.vtabs span { position: relative; padding-left: 10px; line-height: 21px; border: solid #b9bccb; border-width: 0 1px 1px 0; border-radius: 0 0 5px 0; }
.vtabs span:first-child { border-left-width: 1px; padding-left: 9px; }
.vtabs span::before { content: ""; position: absolute; left: -1px; bottom: -1px; width: 8px; height: 8px; background: linear-gradient(45deg, #282828 45%, #b9bccb 45%, #b9bccb 56%, transparent 56%); }
.vtabs .plus svg { width: 12px; height: 12px; vertical-align: -2px; }
.osnap { height: 29px; flex: none; display: grid; align-items: center; padding: 4px 0 0 10px; grid-template-columns: 44px 47px 51px 44px 44px 37px 47px 43px 52px 48px 55px 68px 60px; }
.osnap span { display: flex; align-items: center; gap: 4px; letter-spacing: -.25px; }
.osnap span::before { content: ""; width: 11px; height: 11px; background: #fff; color: #111; font: 11px/11px "DejaVu Sans", sans-serif; }
.osnap .c::before { content: "✓"; }
.osnap .g::before { background: #ddd; }
.status { flex: none; height: 20px; border-top: 1px solid #b9bccb; display: grid; grid-template-columns: 50px 88px 88px 88px 87px 169px 65px 45px 60px; }
.status span, .status b { border-right: 1px solid #b9bccb; text-align: center; line-height: 20px; }
.status b { background: #dcefff; color: #111; border: 1px solid #333; line-height: 18px; }
.status .last { text-align: left; padding-left: 5px; }
.status .layer { text-align: left; display: flex; align-items: center; gap: 3px; padding-left: 4px; }
.layer i { width: 14px; height: 14px; border: 1px solid #fff; background: #000; }

.gh { position: absolute; left: 701px; top: 49px; width: 664px; height: 688px; border-left: 2px solid #3a7fb5; background: #f0f0f0; color: #000; display: flex; flex-direction: column; box-shadow: 0 0 13px rgba(0,0,0,.5), 0 -3px 0 #e8eef6; }
.ghtitle { height: 31px; flex: none; background: #0078d7; color: #fff; line-height: 31px; margin-left: -2px; padding-left: 8px; letter-spacing: -.42px; }
.ghmenu { height: 28px; flex: none; background: #f3f3f3; line-height: 28px; padding-left: 11px; display: grid; grid-template-columns: 37px 39px 44px 57px 63px 60px; }
.ghtabs { height: 23px; flex: none; display: grid; grid-template-columns: 36px 41px 34px 35px 34px 31px 35px 28px 34px 40px 51px 31px 62px 76px 32px 60px; padding-left: 7px; color: #747474; font: 12px/22px "Liberation Sans", sans-serif; letter-spacing: -.2px; border-bottom: 1px solid #999; }
.ghtabs .on { color: #000; background: #fff; border: 1px solid #999; border-bottom: 0; border-radius: 6px 6px 0 0; height: 23px; line-height: 19px; padding-left: 8px; margin-left: 1px; width: 34px; }
.ribbon { height: 87px; flex: none; padding: 2px 0 0 1px; display: grid; grid-template-columns: 182px 258px 98px 137px; gap: 4px; background: #e9e9e9; overflow: hidden; }
.group { height: 73px; border: 1px solid #777; border-radius: 5px; background: linear-gradient(#d2d2d2, #ececec 60%, #dadada); display: flex; flex-direction: column; justify-content: space-between; overflow: hidden; }
.icons { display: grid; grid-auto-rows: 28px; padding: 0 0 0 1px; align-items: center; justify-items: center; }
.icons svg { width: 24px; height: 24px; display: block; }
.colour .icons { grid-template-columns: 28px 28px 28px 28px 46px 12px; background: linear-gradient(#aaa,#aaa) no-repeat 118px 5px / 1px 48px; }
.colour .icons svg:nth-child(6) { justify-self: start; margin-left: -6px; }
.dims .icons { grid-template-columns: 29px 9px 28px 28px 28px 9px 28px 29px 9px 28px 28px; background: linear-gradient(#aaa,#aaa) no-repeat 33px 5px / 1px 48px, linear-gradient(#aaa,#aaa) no-repeat 126px 5px / 1px 48px, linear-gradient(#aaa,#aaa) no-repeat 192px 5px / 1px 48px; }
.dims svg:nth-child(8n+1) { grid-column: 1; }
.dims svg:nth-child(8n+2) { grid-column: 3; }
.dims svg:nth-child(8n+5) { grid-column: 7; }
.dims svg:nth-child(8n+7) { grid-column: 10; }
.graphs .icons { grid-template-columns: 28px 28px 10px 28px; background: linear-gradient(#aaa,#aaa) no-repeat 61px 5px / 1px 48px; }
.graphs svg:nth-child(3n) { grid-column: 4; }
.preview .icons { grid-template-columns: 28px 10px 28px 10px 28px 20px; background: linear-gradient(#aaa,#aaa) no-repeat 33px 5px / 1px 48px, linear-gradient(#aaa,#aaa) no-repeat 71px 5px / 1px 48px; }
.preview svg:nth-child(3n+1) { grid-column: 1; }
.preview svg:nth-child(3n+2) { grid-column: 3; }
.preview svg:nth-child(3n) { grid-column: 5; }
.group footer { height: 14px; background: #1e1e1e; color: #fff; text-align: center; font: 11px/13px "Liberation Sans", sans-serif; letter-spacing: 0; padding-right: 10px; position: relative; }
.group footer::after { content: "+"; position: absolute; right: 2px; top: 0; font-weight: 700; color: #ccc; }
.txt text { font: 9px "Liberation Sans", sans-serif; stroke: #000; stroke-width: .2px; letter-spacing: 0; }
.ln { fill: none; stroke: #111; stroke-width: 1.100; }
.ghbar { height: 31px; flex: none; border-top: 1px solid #888; background: #fafafa; display: flex; align-items: center; padding: 0 0 2px 1px; }
.ghbar > svg { width: 24px; height: 24px; margin-right: 6px; flex: none; }
.ghbar hr { width: 1px; height: 22px; border: 0; background: #bbb; margin: 0 4px 0 2px; }
.combo { width: 136px; height: 23px; border: 1px solid #777; background: #fff; display: flex; align-items: center; justify-content: space-between; padding: 0 4px 0 2px; margin-right: 5px; }
.combo svg { width: 10px; height: 6px; }
.drop { border: 3px solid transparent; border-top: 3px solid #000; height: 0; margin: 3px 6px 0 0; }
.canvas { width: 662px; height: 488px; display: block; flex: none; background: #d4d0c8; }
.canvas text { font: 7.500px "Noto Sans", sans-serif; fill: #333; letter-spacing: -.1px; }
.canvas .port { fill: #eee; stroke: #111; stroke-width: 1.100; }
.wire { fill: none; stroke: #24201c; stroke-opacity: .72; stroke-width: 1.700; }
.slab { fill: #9d9bab; stroke: #222; }
.comp { fill: #9d9ba9; stroke: #2a2a2a; stroke-width: 1.200; }
.light { fill: #d9d9d9; }
```
FILE: draw.js
```js
// Perspective viewport
(function () {
  var s = '';
  // construction plane
  s += '<defs><clipPath id="cp"><polygon points="72,160 60,160 72,167 271,237 72,275"/></clipPath></defs><g clip-path="url(#cp)"><rect x="72" y="160" width="200" height="116" fill="#a3a9af"/>';
  for (var i = 0; i < 34; i++) {
    var y = 275 - i * 1.7 - i * i * .07;
    s += '<path d="M72 ' + y + 'L271 ' + (y - 38) + '" stroke="#6d747c" stroke-opacity="' + (i % 5 ? .3 : .6) + '" stroke-width=".7"/>';
  }
  for (i = 0; i < 42; i++) {
    var x = 271 - i * 4.8;
    s += '<path d="M' + x + ' ' + (237 + i * .92) + 'l-210 ' + (-74 + i * .6) + '" stroke="#6d747c" stroke-opacity="' + (i % 5 ? .3 : .6) + '" stroke-width=".7"/>';
  }
  s += '</g><path d="M72 197L132 188" stroke="#3b983b" stroke-width="1.600"/>';
  function poly(p, f, st, o) {
    s += '<polygon points="' + p + '" fill="' + f + '" stroke="' + (st || 'none') + '" stroke-opacity=".75" fill-opacity="' + (o == null ? 1 : o) + '"/>';
  }
  function line(p, o) { s += '<polyline points="' + p + '" fill="none" stroke="#960a0e" stroke-opacity="' + (o || .8) + '"/>'; }
  s += '<g transform="translate(80 280) scale(.36364 .33333)">';
  poly('38,430 1243,62 1525,157 1519,355 305,872 75,662', '#c1565c', '#a01014');
  poly('68,427 1243,72 1243,262 272,600', '#d45c5f');
  poly('1243,70 1505,157 1240,250', '#b94a50');
  poly('1250,250 1525,157 1515,345', '#da5c60');
  poly('272,600 1240,255 1515,340 305,845', '#c52c2e');
  poly('272,600 1515,160 1510,205 1245,262 300,640', '#cc3034', null, .8);
  poly('38,430 75,424 272,600 305,845 75,640', '#ab2429');
  poly('100,440 272,600 290,700 165,655', '#95191f', null, .7);
  poly('75,640 240,700 290,770 305,845', '#b0151a');
  var L = [[150,550],[222,523],[293,499],[362,475],[429,453],[494,432],[557,408],[617,388],[678,369],[735,349]],
      LF = [[335,775],[412,740],[483,710],[553,683],[620,655],[687,628],[750,603],[811,577],[870,550],[928,525]],
      R = [[786,233],[840,214],[893,198],[946,181],[997,166],[1046,151],[1093,136],[1140,121],[1187,106],[1233,94]],
      RF = [[979,410],[1035,388],[1088,368],[1140,350],[1190,330],[1238,310],[1286,293],[1333,275],[1380,258],[1424,243]];
  function fins(b, f, dark) {
    b.forEach(function (p, k) {
      var x = p[0], y = p[1], X = f[k][0], Y = f[k][1], w = 23, o = .6;
      poly([x,y+5,x+w,y,X,Y-95,X-w,Y-90], dark, '#960a0e', .16);
      poly([x,y+5,X-w,Y-90,X-w+5,Y+4,x+12,y+98], dark, '#960a0e', .18);
      poly([X-w,Y-90,X,Y-95,X,Y-2,X-w+5,Y+4], '#e02428', '#960a0e', .25);
      line([x+w,y,x+w+10,y+92,X,Y-2], o * .5);
    });
  }
  fins(L, LF, '#a21c22');
  fins(R, RF, '#9b343a');
  poly('272,605 862,392 880,480 300,700', '#c20c10', '#a00a0e', .5);
  poly('860,275 1345,122 1350,185 872,375', '#b8383e', '#960a0e', .2);
  poly('225,575 270,600 300,840 290,830 250,710', '#a80c12', '#960a0e', .7);
  ['38,430 272,600 1525,157','45,428 1243,70 1505,157','66,427 90,640','52,428 80,645','75,424 272,590 1505,160','250,585 1240,250 1515,345','75,640 1240,255 1243,62','75,640 305,845 1519,340','90,635 315,835 1500,340','272,600 305,872','260,590 290,830','285,600 325,835','1505,155 1500,345','1510,157 1507,350','240,577 870,360 1250,235','230,585 880,370','265,610 860,390 1340,230','870,275 880,480 300,700','855,275 865,475','860,280 1350,122 1375,178','870,290 1330,135','1253,70 1258,255','75,655 90,632','1519,340 1495,330']
    .forEach(function (p) { line(p); });
  s += '</g><g stroke="#777" fill="none"><path d="M108 604v28l21-8M108 632l21 9"/></g><g fill="#555" font-size="13" font-family="Liberation Sans, sans-serif"><text x="110" y="605">z</text><text x="132" y="624">y</text><text x="132" y="641">x</text></g>';
  document.getElementById('scene').innerHTML = s;
})();

// Node canvas
(function () {
  var s = '<g stroke="#000" stroke-opacity=".16">', i;
  for (i = 0; i < 7; i++) s += '<path d="M' + (793.5 + Math.round(i * 92.1)) + ' 249v488"/>';
  for (i = 0; i < 16; i++) s += '<path d="M703 ' + (Math.round(271.500 + i * 30.72) + .5) + 'h662"/>';
  s += '</g>';
  [ 'M839 323.500h10','M845 372.500l9-4','M889 317c12 0 14 5 28 5','M893 362.500c13 0 8-29 25-29',
    'M961 315.500c14 0 14 22 29 22','M961 315.500c18 0 26 1 38 10','M1015 357C1015 410 948 460 948 520C948 544 975 549 1002 549',
    'M1031 357C1040 420 1026 440 1036 490C1046 530 1075 536 1109 536','M1119 394.500c20 0 4-37 23-37',
    'M1193 358c12 0 10-4 24-4','M1255 360.500c14 0 12 6 29 6','M1326 366c30 0 16-20 16-40c0-20 4-31 22-31','M1326 366c9 2 9 12 20 12',
    'M834 447C1040 447 1150 396 1346 396','M842 502C1080 502 1210 470 1366 438','M842 502C1080 502 1180 495 1366 494',
    'M1047 555c25 0 30-6 62-6','M1072 581c20 0 18-8 37-8','M1154 545.500C1240 545.500 1290 514 1366 514','M1154 545.500C1198 546 1186 613 1231 613',
    'M1272 613C1310 613 1340 616 1366 622','M1336 540C1300 540 1272 540 1273 544C1276 550 1330 554 1366 557'
  ].forEach(function (d) { s += '<path class="wire" d="' + d + '"/>'; });
  // list and tree wires
  s += '<g fill="none"><path d="M1033 338c14 0 12-7 24-7" stroke="#5a5650" stroke-width="3"/><path d="M1033 338c14 0 12-7 24-7" stroke="#d4d0c8"/><path d="M1110 330.500c16 0 18 15 32 15" stroke="#5a5650" stroke-width="3" stroke-dasharray="7 2"/><path d="M1110 330.500c16 0 18 15 32 15" stroke="#d4d0c8" stroke-dasharray="7 2"/></g>';
  function port(x, y) { s += '<circle class="port" cx="' + x + '" cy="' + y + '" r="2"/>'; }
  function txt(x, y, t) { s += '<text x="' + x + '" y="' + (y + 2.5) + '">' + t + '</text>'; }
  function comp(x, y, w, h, ins, outs, cls) {
    ins.forEach(function (p) { port(x - 1, p[1]); });
    outs.forEach(function (p) { port(x + w + 1, p[1]); });
    s += '<rect class="comp ' + (cls || '') + '" x="' + x + '" y="' + y + '" width="' + w + '" height="' + h + '" rx="2"/>';
    ins.forEach(function (p) { if (p[0]) txt(x + 4.5, p[1], p[0]); });
    outs.forEach(function (p) { if (p[0]) txt(x + w - 10 - (p[2] || 0), p[1], p[0]); });
  }
  function slider(x, y, sw, w, label, val, vx, kx, round) {
    port(x + w + 1, y + 6.5);
    s += '<rect x="' + x + '" y="' + y + '" width="' + w + '" height="12" rx="2" fill="#e3e3e3" stroke="#222"/><path class="slab" d="M' + x + ' ' + y + 'h' + sw + 'v12h-' + sw + 'z"/>';
    s += '<path d="M' + (x + sw + 5) + ' ' + (y + 6) + 'H' + (x + w - 6) + '" stroke="#bbb"/><path d="M' + (x + sw + 5) + ' ' + (y + 6) + 'H' + (x + w - 5) + '" stroke="#aaa" stroke-width="4" stroke-dasharray="1 9"/>';
    s += '<text x="' + (x + 4) + '" y="' + (y + 8.5) + '" textLength="' + (sw - 8) + '" lengthAdjust="spacingAndGlyphs">' + label + '</text>';
    s += '<rect x="' + (vx - 1) + '" y="' + (y + 2) + '" width="' + (val.length * 3.8 + 1) + '" height="8" fill="#e3e3e3"/>';
    s += '<text x="' + vx + '" y="' + (y + 8.5) + '" textLength="' + (val.length > 2 ? 16.5 : 8) + '" lengthAdjust="spacingAndGlyphs">' + val + '</text>';
    s += round ? '<circle cx="' + kx + '" cy="' + (y + 6) + '" r="2" fill="#fff" stroke="#111" stroke-width="1.300"/>' : '<path d="M' + (kx - 2.2) + ' ' + (y + 6) + 'l2.200 -2.200 2.200 2.200-2.200 2.200z" fill="#fff" stroke="#111"/>';
  }
  slider(713.5, 317.5, 45, 125, 'Domain end', '20', 782.5, 778);
  slider(717.5, 366.5, 45, 125, 'Domain end', '59', 792.5, 788);
  slider(729.5, 440.5, 29, 103, 'Length', '3.044', 788, 783, 1);
  slider(737.5, 495.5, 28, 102, 'Length', '6.346', 789.5, 811, 1);
  slider(967.5, 574.5, 29, 102, 'Scale Y', '1.090', 1012.5, 1008, 1);
  comp(850, 304, 37.5, 27, [['A', 310.5], ['B', 322.5]], [['I', 317]]);
  comp(852.5, 349.5, 37.5, 27, [['A', 356], ['B', 368]], [['I', 362]]);
  [[863, 308], [865, 353.5]].forEach(function (p) {
    s += '<text x="' + p[0] + '" y="' + (p[1] + 7) + '" style="font-weight:600">0</text><text x="' + (p[0] + 7.5) + '" y="' + (p[1] + 7) + '" style="font-weight:600">1</text><path d="M' + (p[0] + 3) + ' ' + (p[1] + 8) + 'v6M' + (p[0] + 10) + ' ' + (p[1] + 8) + 'v6" stroke="#111" stroke-width="1.500"/><path d="M' + (p[0] + 2) + ' ' + (p[1] + 13) + 'h9" stroke="#19b066" stroke-width="2.500"/>';
  });
  comp(919, 302.5, 40, 51, [['P', 309], ['X', 321.5], ['Y', 333.5], ['R', 346]], [['R', 315], ['L', 340]]);
  s += '<rect x="933" y="322" width="11" height="11" rx="1.500" fill="#d92" stroke="#222"/><path d="M935 324h7v7h-7z" fill="#fc2" stroke="#d22"/><path d="M938.500 324v3.500h3.500" fill="none" stroke="#d22"/>';
  comp(991.5, 319, 39, 38, [['B', 338]], [['F', 326], ['E', 338], ['V', 350.5]]);
  s += '<circle cx="1009" cy="338.500" r="5" fill="#b4532a" stroke="#511"/><circle cx="1009" cy="339.500" r="2.800" fill="#dcc"/><path d="M1004 336l-1-4 3 2 1-3 2 3 2-3 1 3 3-1-1 4" fill="#e8a33a" stroke="#821" stroke-width=".8"/>';
  comp(1057, 323.5, 50, 39, [['C', 330.5], ['N', 343], ['K', 355]], [['P', 330.5, 11], ['T', 343, 11], ['t', 355, 11]]);
  s += '<path d="M1071 347l3-2 4-7 4-1" fill="none" stroke="#511" stroke-width="1.200"/><circle cx="1074" cy="345" r="1" fill="#d33"/><circle cx="1078" cy="338" r="1" fill="#d33"/><rect x="1096.500" y="326.500" width="8" height="8" rx="1" fill="#ddd" stroke="#333" stroke-width=".8"/><path d="M1098 328l2.500 3 2.500-3M1100.500 331v3" stroke="#333" fill="none" stroke-width=".8"/>';
  port(1067.5, 394.5);
  port(1119, 394.5);
  s += '<rect class="comp" style="fill:#ff1" x="1068.500" y="382.500" width="49.500" height="24" rx="2"/><text x="1088" y="396" fill-opacity=".5">1</text>';
  comp(1143, 338.5, 49.5, 39, [['', 345.5], ['', 358], ['W', 370]], [['', 358]]);
  txt(1150, 345.5, 'L'); txt(1151, 357.5, 'i'); txt(1173, 357.5, 'i');
  s += '<rect x="1162" y="351" width="4.500" height="12" fill="#7c2" stroke="#272" stroke-width=".7"/><path d="M1158.500 360v-5l3 5v-5" stroke="#222" fill="none"/><path d="M1163 357.500h8M1168 355l3 2.500-3 2.500" stroke="#c11" stroke-width="1.600" fill="none"/><rect x="1181.500" y="353.500" width="8" height="8" rx="1" fill="#ddd" stroke="#333" stroke-width=".8"/><path d="M1185.500 355v5M1183 358l2.500 2.500 2.500-2.500" stroke="#333" fill="none" stroke-width=".8"/>';
  comp(1216.5, 347, 38, 27, [['L', 353.5], ['P', 366]], [['L', 360]]);
  s += '<path d="M1230 354h5v11h-5z" fill="#fff" stroke="#111"/><path d="M1231 355h2v2h-2zM1233 358h2v2h-2zM1231 361h2v2h-2z" fill="#111"/><path d="M1233.500 358.500l6 6M1239.500 358.500l-6 6" stroke="#d11" stroke-width="2.500"/>';
  comp(1285, 357.5, 38, 17, [['P', 366]], [['L', 366]]);
  s += '<path d="M1298 371l3-3 2-4 5-4" fill="none" stroke="#111" stroke-width="2.500"/><circle cx="1299" cy="370" r="1" fill="#fff"/><circle cx="1303" cy="366" r="1" fill="#fff"/><circle cx="1307" cy="361" r="1" fill="#fff"/>';
  comp(1346.5, 367.5, 30, 39, [['C', 377.5], ['L', 396]], []);
  s += '<path d="M1361 390l3-2 2-6" stroke="#511" fill="none" stroke-width="1.500"/>';
  comp(1364, 289, 30, 25, [['', 295.5], ['', 307.5]], []);
  comp(1003.5, 535.5, 41, 27, [['G', 549]], [['A', 542.5], ['C', 555]], 'light');
  s += '<text x="1017" y="552" style="font:italic bold 12px Liberation Serif,serif;fill:#111">m²</text>';
  comp(1110.5, 528.5, 41, 64, [['G', 536], ['P', 548.5], ['X', 560.5], ['Y', 572.5], ['Z', 585]], [['G', 545], ['X', 576]], 'light');
  s += '<path d="M1126 557l2-2h7v8l-2 2h-7z" fill="#f6d448" stroke="#542"/><path d="M1126 557h7v8M1133 557l2-2M1129 565v-4h4" fill="none" stroke="#542" stroke-width=".7"/>';
  comp(1232, 604.5, 39, 17, [['E', 613]], [['S', 613]]);
  s += '<path d="M1244 607c6 0 6 3 7 6l4 0-4 5h-7z" fill="#f88a18" stroke="#732"/>';
  comp(1336.5, 532, 40, 17, [['F', 540]], []);
  s += '<path d="M1350 546l4-10M1354 537h-3M1355.500 540.500h4.500l-5 5.500h5" stroke="#111" stroke-width="1.400" fill="none"/><text x="1363" y="542.500">Y</text>';
  document.getElementById('canvas').innerHTML = s;
})();
```
